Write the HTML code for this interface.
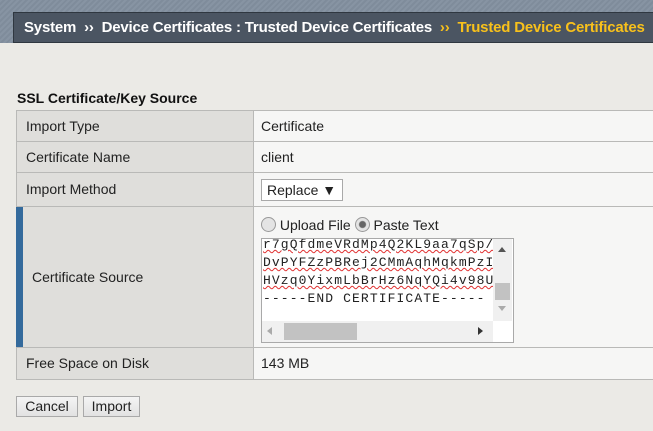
<!DOCTYPE html>
<html><head><style>
*{box-sizing:border-box;margin:0;padding:0}
body{width:653px;height:431px;background:#ebeae6;font-family:"Liberation Sans",Arial,sans-serif;font-size:14px;color:#222;position:relative;overflow:hidden}
.top{position:absolute;left:0;top:0;width:653px;height:43px;background:repeating-linear-gradient(135deg,#8794a3 0 2px,#7f8c9b 2px 4px)}
.nav{position:absolute;left:13px;top:12px;width:645px;height:31px;background:#4b5562;border:1px solid #2f3740;color:#fff;font-weight:bold;font-size:15px;line-height:29px;padding-left:10px;white-space:nowrap;letter-spacing:-0.2px}
.nav .y{color:#f8c11b}
h3{position:absolute;left:17px;top:90px;font-size:14px;font-weight:bold;color:#111}
.row{position:absolute;left:16px;width:640px;border-top:1px solid #b9b9b7}
.lab{position:absolute;left:0;top:0;bottom:0;width:238px;background:#dfdedb;border-left:1px solid #b9b9b7;border-right:1px solid #b9b9b7;padding-left:9px}
.val{position:absolute;left:238px;top:0;bottom:0;right:0;background:#f6f6f5;padding-left:7px}
.btn{position:absolute;top:396px;height:21px;border:1px solid #a9a9a9;background:linear-gradient(#f4f4f4,#e2e2e2);font-size:14px;line-height:19px;text-align:center}
.mono{font-family:"Liberation Mono",monospace;font-size:13px;letter-spacing:1.1px;line-height:18px;white-space:nowrap;color:#222}
.sq{text-decoration:underline wavy #e03030;text-decoration-thickness:1px}
</style></head><body>
<div class="top"></div>
<div class="nav">System &nbsp;›› &nbsp;Device Certificates : Trusted Device Certificates &nbsp;<span class="y">›› &nbsp;Trusted Device Certificates</span></div>
<h3>SSL Certificate/Key Source</h3>

<div class="row" style="top:110px;height:31px"><div class="lab" style="line-height:30px">Import Type</div><div class="val" style="line-height:30px">Certificate</div></div>
<div class="row" style="top:141px;height:31px"><div class="lab" style="line-height:30px">Certificate Name</div><div class="val" style="line-height:30px">client</div></div>
<div class="row" style="top:172px;height:34px"><div class="lab" style="line-height:33px">Import Method</div><div class="val">
<div style="position:absolute;left:7px;top:6px;width:82px;height:22px;border:1px solid #a9a9a9;background:#fff;line-height:20px;padding-left:5px">Replace ▼</div></div></div>
<div class="row" style="top:206px;height:141px"><div class="lab" style="line-height:140px;padding-left:15px"><div style="position:absolute;left:-1px;top:0;bottom:0;width:7px;background:#346a9c"></div>Certificate Source</div><div class="val">
<div style="position:absolute;left:7px;top:9px;line-height:18px;white-space:nowrap"><span style="display:inline-block;width:15px;height:15px;border-radius:50%;border:1px solid #999;background:#e4e4e4;vertical-align:-2px"></span> Upload File <span style="display:inline-block;width:15px;height:15px;border-radius:50%;border:1px solid #999;background:radial-gradient(#666 0 3px,#e4e4e4 4px);vertical-align:-2px"></span> Paste Text</div>
<div style="position:absolute;left:7px;top:31px;width:253px;height:105px;border:1px solid #a9a9a9;background:#fff;overflow:hidden">
<div class="mono" style="position:absolute;left:1px;top:-3px;width:231px;overflow:hidden">
<div class="sq">r7gQfdmeVRdMp4Q2KL9aa7qSp/</div><div class="sq">DvPYFZzPBRej2CMmAqhMqkmPzI</div><div class="sq">HVzq0YixmLbBrHz6NqYQi4v98U</div><div>-----END CERTIFICATE-----</div></div>
<div style="position:absolute;left:231px;top:0;width:19px;height:82px;background:#f0f0f0"><div style="position:absolute;left:2px;top:44px;width:15px;height:17px;background:#c2c2c2"></div><div style="position:absolute;left:5px;top:8px;border:4px solid transparent;border-bottom:5px solid #555;border-top:0"></div><div style="position:absolute;left:5px;top:67px;border:4px solid transparent;border-top:5px solid #aaa;border-bottom:0"></div></div>
<div style="position:absolute;left:0;top:82px;width:231px;height:21px;background:#f0f0f0"><div style="position:absolute;left:22px;top:2px;width:73px;height:17px;background:#c2c2c2"></div><div style="position:absolute;left:5px;top:6px;border:4px solid transparent;border-right:5px solid #aaa;border-left:0"></div><div style="position:absolute;left:216px;top:6px;border:4px solid transparent;border-left:5px solid #333;border-right:0"></div></div>
</div></div></div>
<div class="row" style="top:347px;height:33px;border-bottom:1px solid #b9b9b7"><div class="lab" style="line-height:31px">Free Space on Disk</div><div class="val" style="line-height:31px">143 MB</div></div>

<div class="btn" style="left:16px;width:62px">Cancel</div>
<div class="btn" style="left:83px;width:57px">Import</div>
</body></html>
